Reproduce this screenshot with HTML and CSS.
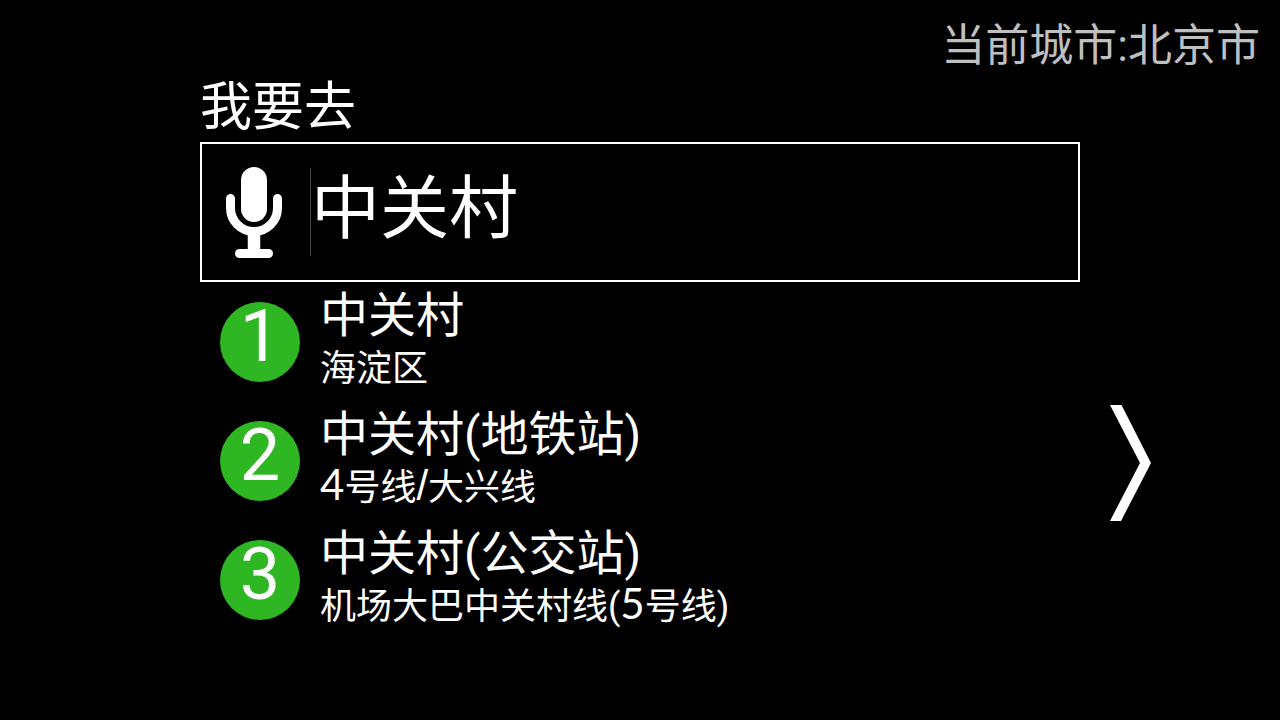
FILE: index.html
```html
<!DOCTYPE html>
<html lang="zh-CN">
<head>
<meta charset="utf-8">
<meta name="viewport" content="width=device-width, initial-scale=1">
<title>我要去</title>
<link rel="stylesheet" href="styles.css">
</head>
<body>
<header class="city">当前城市:北京市</header>
<main class="layout">
  <form class="search">
    <label class="search-label" for="destination">我要去</label>
    <div class="search-box">
      <button class="mic" type="button" aria-label="语音输入">
        <svg class="mic-icon" viewBox="0 0 56 92" aria-hidden="true">
          <rect x="15" y="1" width="26" height="55" rx="13" fill="#fff"/>
          <path d="M4.500 32.500V42a23.500 23.500 0 0 0 47 0V32.500" fill="none" stroke="#fff" stroke-width="9" stroke-linecap="round"/>
          <path d="M28 66V88" stroke="#fff" stroke-width="12.500"/>
          <rect x="9" y="83" width="38" height="9" rx="4.500" fill="#fff"/>
        </svg>
      </button>
      <input class="search-input" id="destination" type="text" value="中关村" autocomplete="off">
    </div>
  </form>
  <ol class="results">
    <li>
      <button class="result" type="button">
        <span class="badge">1</span>
        <span class="place"><span class="name">中关村</span><span class="detail">海淀区</span></span>
      </button>
    </li>
    <li>
      <button class="result" type="button">
        <span class="badge">2</span>
        <span class="place"><span class="name">中关村(地铁站)</span><span class="detail"><span class="digit">4</span>号线<span class="slash">/</span>大兴线</span></span>
      </button>
    </li>
    <li>
      <button class="result" type="button">
        <span class="badge">3</span>
        <span class="place"><span class="name">中关村(公交站)</span><span class="detail">机场大巴中关村线(<span class="digit">5</span>号线)</span></span>
      </button>
    </li>
  </ol>
  <button class="next" type="button" aria-label="下一页">
    <svg class="next-icon" viewBox="0 0 42 116" aria-hidden="true">
      <path d="M0 0H11.500L41 58L11 116H0L30 58Z" fill="#fff"/>
    </svg>
  </button>
</main>
</body>
</html>
```
FILE: styles.css
```css
* {
  box-sizing: border-box;
}

body {
  margin: 0;
  min-height: 100vh;
  background: #000;
  color: #fff;
  font-family: Roboto, "Noto Sans CJK SC", sans-serif;
  font-weight: 400;
}

button,
input {
  margin: 0;
  padding: 0;
  border: 0;
  background: none;
  color: inherit;
  font: inherit;
}

button {
  cursor: pointer;
}

.city {
  padding: 16px 20px 0;
  color: #bfbfbf;
  font-size: 44px;
  line-height: 60px;
  text-align: right;
}

.layout {
  display: grid;
  grid-template-columns: 1fr minmax(0, 880px) 1fr;
}

.search {
  grid-column: 2;
}

.search-label {
  display: block;
  padding-bottom: 2px;
  font-size: 52px;
  line-height: 64px;
}

.search-box {
  display: flex;
  align-items: center;
  height: 140px;
  padding-left: 24px;
  border: 2px solid #fff;
}

.mic {
  display: flex;
  width: 85px;
  height: 88px;
  align-items: center;
  border-right: 1px solid #444;
}

.mic-icon {
  width: 56px;
  height: 92px;
}

.search-input {
  flex: 1;
  min-width: 0;
  height: 100%;
  padding-bottom: 18px;
  font-size: 69px;
  outline: 0;
}

.results {
  grid-column: 2;
  margin: 0;
  padding: 0 0 4px;
  list-style: none;
}

.result {
  display: flex;
  gap: 20px;
  align-items: flex-start;
  width: 100%;
  padding: 4px 20px 11px;
  text-align: left;
}

.badge {
  width: 80px;
  height: 80px;
  margin-top: 16px;
  border-radius: 50%;
  background: #2eb722;
  font-size: 72px;
  line-height: 70px;
  text-align: center;
}

.name,
.detail {
  display: block;
}

.name {
  font-size: 48px;
  line-height: 60px;
}

.detail {
  font-size: 36px;
  line-height: 46px;
  margin-bottom: -2px;
}

.digit,
.slash {
  font-size: 42px;
  line-height: 1px;
}

.digit {
  font-family: Lato, sans-serif;
}

.slash {
  font-family: "Liberation Sans", sans-serif;
}

.next {
  grid-column: 3;
  align-self: center;
  justify-self: start;
  display: flex;
  margin-left: 30px;
}

.next-icon {
  width: 42px;
  height: 116px;
}
```
